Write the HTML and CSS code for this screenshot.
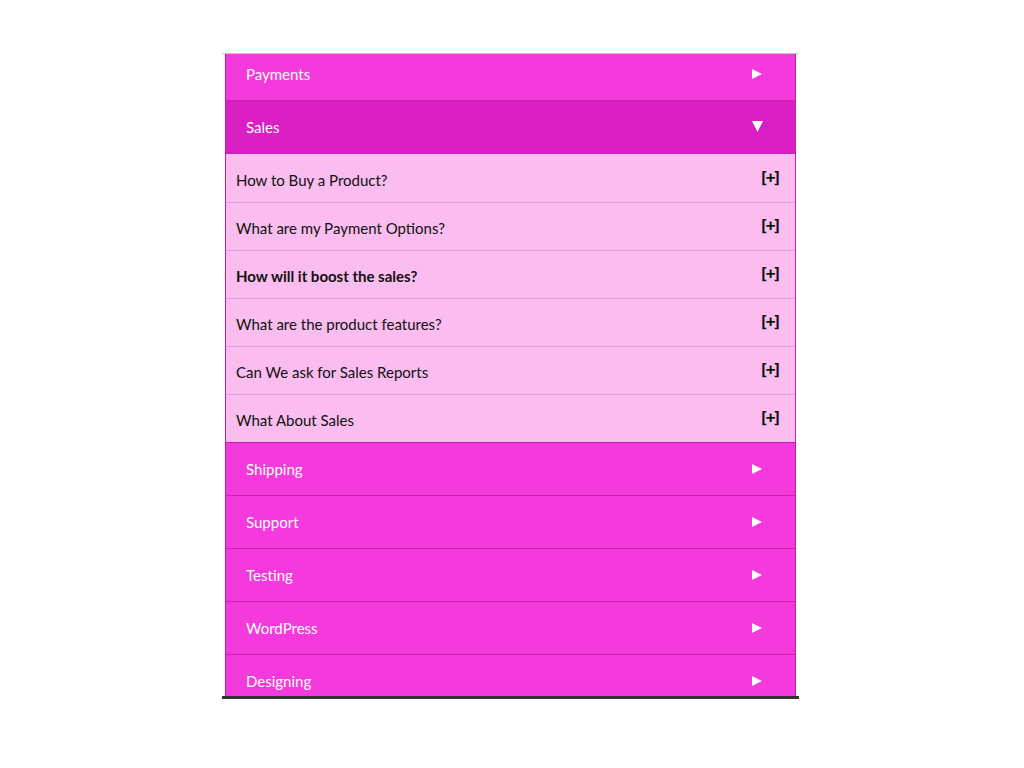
FILE: index.html
```html
<!DOCTYPE html>
<html>
<head>
<meta charset="utf-8">
<link rel="stylesheet" href="styles.css">
</head>
<body>
<div class="frame">
  <div class="viewport">
    <div class="accordion">
      <div class="head"><span>Payments</span><svg class="arrow" viewBox="0 0 10 10"><path d="M0 0L10 5L0 10Z"/></svg></div>
      <div class="head active"><span>Sales</span><svg class="arrow down" viewBox="0 0 10 10"><path d="M0 0L10 0L5 10Z"/></svg></div>
      <div class="body">
        <div class="q"><span>How to Buy a Product?</span><span class="plus">[+]</span></div>
        <div class="q"><span>What are my Payment Options?</span><span class="plus">[+]</span></div>
        <div class="q bold"><span>How will it boost the sales?</span><span class="plus">[+]</span></div>
        <div class="q"><span>What are the product features?</span><span class="plus">[+]</span></div>
        <div class="q"><span>Can We ask for Sales Reports</span><span class="plus">[+]</span></div>
        <div class="q last"><span>What About Sales</span><span class="plus">[+]</span></div>
      </div>
      <div class="head"><span>Shipping</span><svg class="arrow" viewBox="0 0 10 10"><path d="M0 0L10 5L0 10Z"/></svg></div>
      <div class="head"><span>Support</span><svg class="arrow" viewBox="0 0 10 10"><path d="M0 0L10 5L0 10Z"/></svg></div>
      <div class="head"><span>Testing</span><svg class="arrow" viewBox="0 0 10 10"><path d="M0 0L10 5L0 10Z"/></svg></div>
      <div class="head"><span>WordPress</span><svg class="arrow" viewBox="0 0 10 10"><path d="M0 0L10 5L0 10Z"/></svg></div>
      <div class="head"><span>Designing</span><svg class="arrow" viewBox="0 0 10 10"><path d="M0 0L10 5L0 10Z"/></svg></div>
    </div>
  </div>
  <div class="bottom-bar"></div>
</div>
</body>
</html>
```

FILE: styles.css
```css
* { box-sizing: border-box; }
body {
  margin: 0;
  background: #fff;
  font-family: "Lato", "Liberation Sans", sans-serif;
}
.frame {
  width: 577px;
  margin: 53px 0 0 222px;
  border-top: 1px solid #c8c8c8;
}
.viewport {
  height: 642px;
  overflow: hidden;
  padding: 0 3px;
}
.accordion {
  margin-top: -6px;
  width: 571px;
  border-left: 1px solid #c51cb0;
  border-right: 1px solid #c51cb0;
}
.head {
  height: 53px;
  display: flex;
  align-items: center;
  justify-content: space-between;
  padding: 0 33px 1px 20px;
  background: #f43adc;
  color: #fff;
  font-size: 15px;
  border-bottom: 1px solid #c91db4;
}
.head.active {
  background: #db1fc4;
}
.arrow {
  width: 10px;
  height: 10px;
  fill: #fff;
}
.arrow.down {
  width: 11px;
  height: 11px;
  margin-right: -1px;
}
.body {
  background: #fbbcef;
  padding-top: 1px;
}
.q {
  height: 48px;
  display: flex;
  align-items: center;
  justify-content: space-between;
  padding: 2px 18px 0 10px;
  color: #111;
  font-size: 15px;
  border-bottom: 1px solid #e3a0d6;
}
.q.last { border-bottom: 1px solid #c91db4; }
.q.bold { font-weight: bold; }
.plus {
  font-weight: bold;
  font-size: 16px;
  font-family: "DejaVu Sans Mono", monospace;
  letter-spacing: -3px;
  margin-top: -5px;
  margin-right: -2px;
}
.bottom-bar {
  height: 3px;
  background: #333;
}
```
